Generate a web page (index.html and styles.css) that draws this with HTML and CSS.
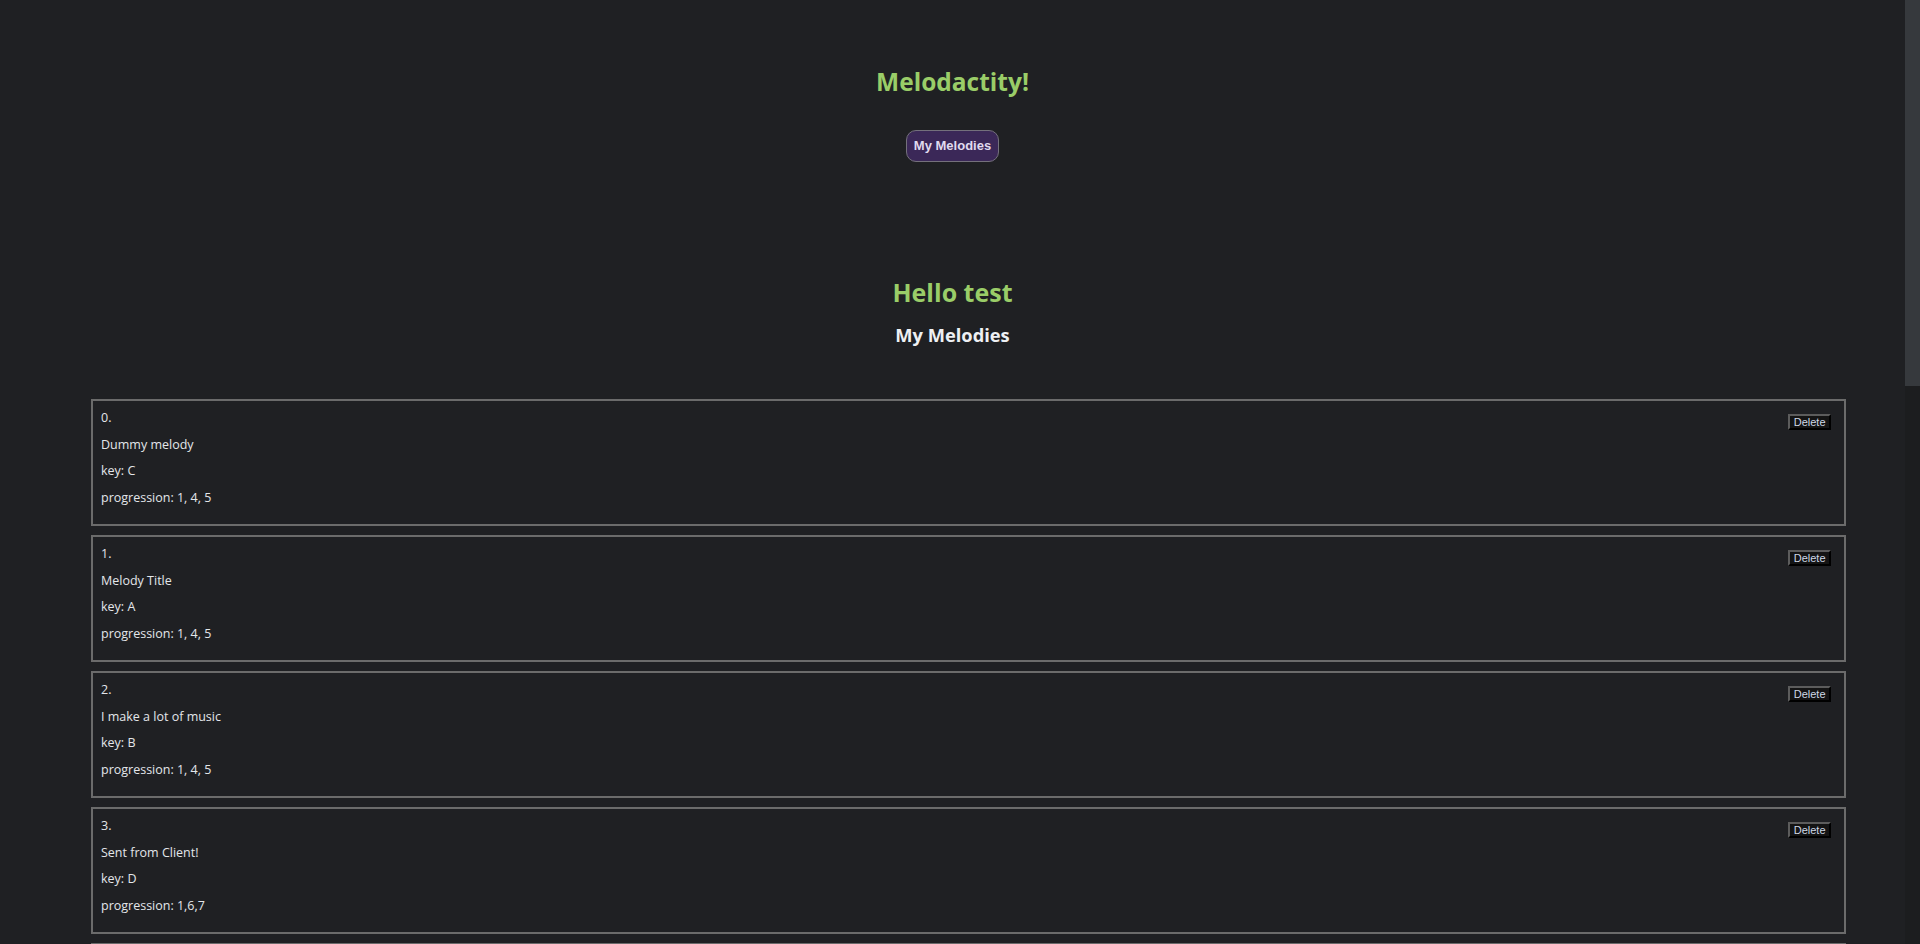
FILE: index.html
```html
<!DOCTYPE html>
<html lang="en">
<head>
<meta charset="utf-8">
<title>Melodactity!</title>
<link rel="stylesheet" href="styles.css">
</head>
<body>
<div class="page">
  <div class="main">
    <header class="top">
      <h1 class="title">Melodactity!</h1>
      <button class="nav-btn">My Melodies</button>
    </header>
    <section class="greeting">
      <h2 class="hello">Hello test</h2>
      <h3 class="sub">My Melodies</h3>
    </section>
    <ul class="list">
      <li class="card">
        <div class="info">
          <p>0.</p>
          <p>Dummy melody</p>
          <p>key: C</p>
          <p>progression: 1, 4, 5</p>
        </div>
        <button class="del">Delete</button>
      </li>
      <li class="card">
        <div class="info">
          <p>1.</p>
          <p>Melody Title</p>
          <p>key: A</p>
          <p>progression: 1, 4, 5</p>
        </div>
        <button class="del">Delete</button>
      </li>
      <li class="card">
        <div class="info">
          <p>2.</p>
          <p>I make a lot of music</p>
          <p>key: B</p>
          <p>progression: 1, 4, 5</p>
        </div>
        <button class="del">Delete</button>
      </li>
      <li class="card">
        <div class="info">
          <p>3.</p>
          <p>Sent from Client!</p>
          <p>key: D</p>
          <p>progression: 1,6,7</p>
        </div>
        <button class="del">Delete</button>
      </li>
      <li class="card">
        <div class="info">
          <p>4.</p>
          <p>Another melody</p>
          <p>key: E</p>
          <p>progression: 1, 5, 6</p>
        </div>
        <button class="del">Delete</button>
      </li>
    </ul>
  </div>
  <div class="scrollbar"><div class="thumb"></div></div>
</div>
</body>
</html>
```

FILE: styles.css
```css
html, body {
  margin: 0;
  padding: 0;
  background: #1f2023;
}

.page {
  display: flex;
  height: 944px;
  overflow: hidden;
}

.main {
  flex: 1;
  min-width: 0;
  font-family: "Open Sans", "Noto Sans", sans-serif;
  color: #e3e6ea;
}

.top {
  display: flex;
  flex-direction: column;
  align-items: center;
  padding-top: 68px;
}

.title {
  margin: 0;
  font-size: 24.5px;
  line-height: 28px;
  font-weight: 700;
  color: #9acd68;
}

.nav-btn {
  margin-top: 34px;
  height: 32px;
  padding: 0 7px;
  border: 1px solid #74707c;
  border-radius: 10px;
  background: #3b2858;
  color: #e0dbef;
  font-family: "Liberation Sans", Arial, sans-serif;
  font-weight: 700;
  font-size: 13px;
  line-height: 16px;
}

.greeting {
  display: flex;
  flex-direction: column;
  align-items: center;
  padding-top: 115px;
}

.hello {
  margin: 0;
  font-size: 25px;
  line-height: 30px;
  font-weight: 700;
  color: #9acd68;
}

.sub {
  margin: 17px 0 0;
  font-size: 18.3px;
  line-height: 22px;
  font-weight: 700;
  color: #eef0f3;
}

.list {
  list-style: none;
  margin: 53px 59px 0 91px;
  padding: 0;
  display: flex;
  flex-direction: column;
  gap: 9px;
}

.card {
  display: flex;
  justify-content: space-between;
  align-items: flex-start;
  height: 127px;
  box-sizing: border-box;
  border: 2px solid #6b6b6b;
  padding: 9.3px 13px 0 8px;
}

.info {
  display: flex;
  flex-direction: column;
  gap: 11.45px;
}

.info p {
  margin: 0;
  font-size: 12.5px;
  line-height: 15px;
}

.del {
  margin-top: 3.7px;
  height: 16px;
  padding: 0 3.5px;
  border: 2px outset #5a5a5a;
  border-color: #5c5c5c #000 #000 #5c5c5c;
  background: #141414;
  color: #cfd8e6;
  font-family: "Liberation Sans", Arial, sans-serif;
  font-size: 11px;
  line-height: 12px;
}

.scrollbar {
  width: 15px;
  flex: none;
  background: #1c1d1f;
}

.thumb {
  height: 386px;
  background: #36393d;
}
```
